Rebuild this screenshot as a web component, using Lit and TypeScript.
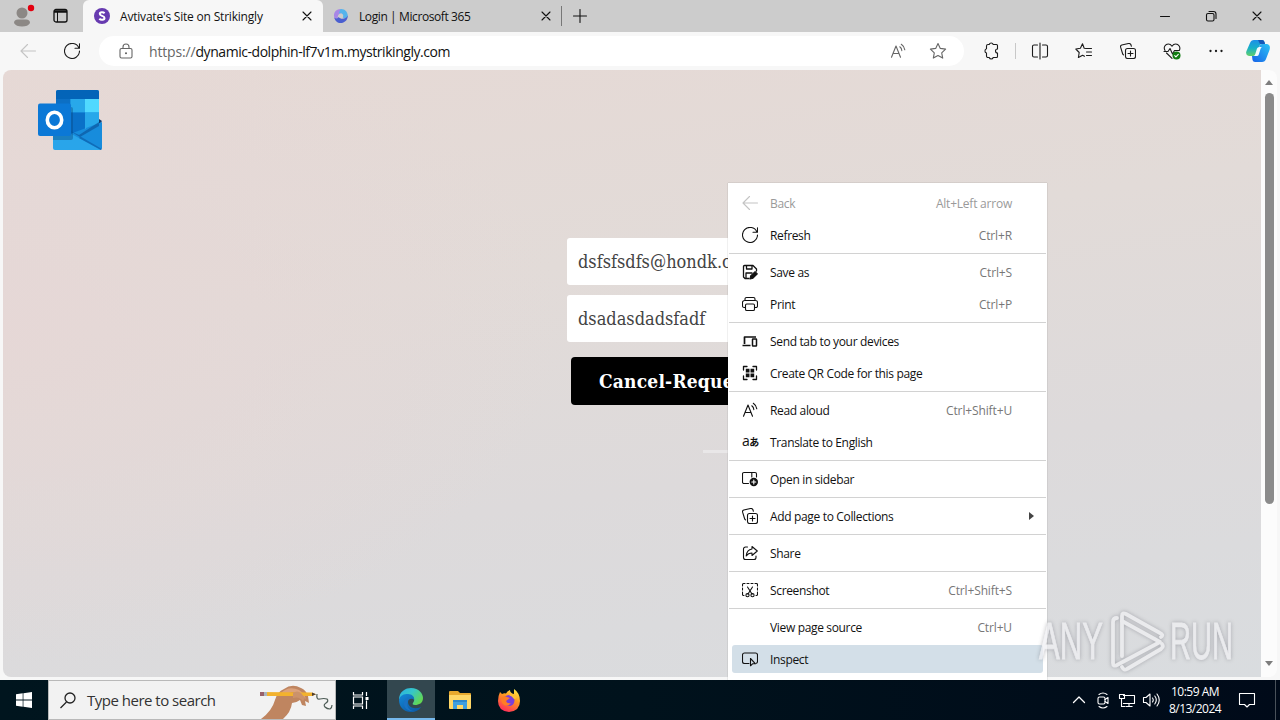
import { html, css, svg, nothing, LitElement } from 'lit';
import { customElement } from 'lit/decorators.js';
import { classMap } from 'lit/directives/class-map.js';

const line = (size: number, body: unknown) => html`
  <svg width=${size} height=${size} viewBox="0 0 ${size} ${size}" fill="none"
    stroke="currentColor" stroke-width="1.1" stroke-linecap="round" stroke-linejoin="round">${body}</svg>`;

const icons: Record<string, unknown> = {
  back: line(16, svg`<path d="M15.500 8H1M7.500 1.500 1 8l6.500 6.500" />`),
  refresh: line(16, svg`<path d="M14.900 5A7.500 7.500 0 1 0 15.500 8M15.500 .8V5.200H11" />`),
  save: line(16, svg`<path d="M7 14.500H3L1.500 13V2.500a1 1 0 0 1 1-1H11L14.500 5v2M4.500 1.800V5H10V1.800M4 14.300V9H10" stroke-width="1.300" />
    <path d="M8 15l.6-3 4.500-4.300 2.200 2.200L11 14.200Z" fill="currentColor" />`),
  print: line(16, svg`<path d="M3.500 11.500H2A1.500 1.500 0 0 1 .5 10V6.500a2 2 0 0 1 2-2h11a2 2 0 0 1 2 2V10a1.500 1.500 0 0 1-1.500 1.500h-1.500M3 4.300V3a1.500 1.500 0 0 1 1.500-1.500h7A1.500 1.500 0 0 1 13 3v1.300" />
    <rect x="3.500" y="8" width="9" height="6.500" rx="1.300" />`),
  devices: line(16, svg`<path d="M2.500 11V4H14M.5 12.500H8.500" stroke-width="1.700" stroke-linecap="butt" /><rect x="10.500" y="6" width="4" height="7" rx=".5" stroke-width="1.500" />`),
  qr: line(16, svg`<path d="M1.500 5V1.500H5M11 1.500h3.500V5M14.500 11v3.500H11M5 14.500H1.500V11" stroke-width="1.300" />
    <path d="M3.800 3.800h3.700v3.700H3.800zM8.500 3.800h3.700v3.700H8.500zM3.800 8.500h3.700v3.700H3.800zM8.500 8.500h3.700v3.700H8.500z" fill="currentColor" stroke="none" />`),
  read: line(16, svg`<path d="M1.500 14.300 6 3l4.500 11.300M3 10.500h6M9.800 3.800a5 5 0 0 1 2 3.800M11.300 1.300a8 8 0 0 1 3.500 5.500" />`),
  sidebar: line(16, svg`<path d="M6.500 12.500H2A1.500 1.500 0 0 1 .5 11V3A1.500 1.500 0 0 1 2 1.500h11A1.500 1.500 0 0 1 14.500 3V6M9.800 1.500V6" />
    <circle cx="11.800" cy="11" r="4.200" fill="currentColor" stroke="none" /><path d="M11.800 9v4M9.800 11h4" stroke="#fff" />`),
  collections: line(16, svg`<rect x="5.500" y="5.500" width="10" height="10" rx="2" /><path d="M10.500 8v5M8 10.500h5M3.500 11.800 2.700 11 .6 4.200A1.800 1.800 0 0 1 1.800 2L8.500 .5A2 2 0 0 1 11 2l.4 1.300" />`),
  share: line(16, svg`<path d="M5.500 2H3.500A2 2 0 0 0 1.500 4v8.500a2 2 0 0 0 2 2H12a2 2 0 0 0 2-2V11" /><path d="M10 1.500 15.300 6 10 10.500V8C7 8 5.500 9 4.200 11 4.500 7 6.500 4.500 10 4Z" />`),
  screenshot: line(16, svg`<path d="M.5 4V2.500a1 1 0 0 1 1-1H3M5 1.500h2M9 1.500h2M13 1.500h1.500a1 1 0 0 1 1 1V4M15.500 6v2M15.500 10v2.500a1 1 0 0 1-1 1H14M.5 6v2M.5 10v2.500a1 1 0 0 0 1 1H2" />
    <path d="M5.500 5 10 12M10.500 5 6 12" /><circle cx="5.500" cy="13.200" r="1.600" /><circle cx="10.500" cy="13.200" r="1.600" />`),
  inspect: line(16, svg`<path d="M7 12.500H2.500a2 2 0 0 1-2-2V4a2 2 0 0 1 2-2h11a2 2 0 0 1 2 2v6.500a2 2 0 0 1-1 1.700" /><path d="M8.500 7.500v7.300l2-2h3Z" />`),
  lock: line(16, svg`<rect x="2" y="5.500" width="12" height="9.500" rx="1.500" /><path d="M5 5.500V4a3 3 0 0 1 6 0v1.500" /><circle cx="8" cy="10.300" r=".5" fill="currentColor" />`),
  star: line(18, svg`<path d="m9 1.500 2.300 4.900 5.300 .7-3.900 3.700 1 5.300L9 13.500l-4.700 2.600 1-5.300-3.900-3.700 5.300-.7Z" />`),
  puzzle: line(18, svg`<path d="M6 2.500h1.200a2.100 2.100 0 0 1 4 0H14.500a1 1 0 0 1 1 1V7a2 2 0 0 0 0 4v3.500a1 1 0 0 1-1 1h-3.300a2.100 2.100 0 0 1-4 0H6a1.500 1.500 0 0 1-1.500-1.500v-3a2.200 2.200 0 0 1 0-4.200V4A1.500 1.500 0 0 1 6 2.500Z" />`),
  split: line(18, svg`<path d="M9 1v16M6.500 3H3a1.500 1.500 0 0 0-1.500 1.500v9A1.500 1.500 0 0 0 3 15h3.500M11.500 3H15a1.500 1.500 0 0 1 1.500 1.500v9A1.500 1.500 0 0 1 15 15h-3.500" />`),
  favorites: line(18, svg`<path d="M11 6.500 9.200 6.200 7.500 1.800 5.400 6.300 .8 7l3.400 3.500-.8 5 4.200-2.300 1.900 1M11.500 6.500h5M11.500 10h5M11.500 13.500h5" />`),
  heart: line(18, svg`<path d="M2 8.500C0 5 2.500 2 5.300 2 7.200 2 8.200 3 9 4.200 9.800 3 10.800 2 12.700 2 15.500 2 18 5 16.300 8.500M3.500 11 9 16.300M1 9.500H5L7 6.500 9.500 12l2-3.500H16" />
    <circle cx="13.500" cy="13.500" r="4" fill="#107c10" stroke="none" /><path d="m11.700 13.600 1.200 1.200 2.400-2.500" stroke="#fff" />`),
  more: line(18, svg`<path d="M3.500 9h.01M9 9h.01M14.500 9h.01" stroke-width="2.300" />`),
  close: line(10, svg`<path d="m1 1 8 8M9 1 1 9" />`),
  plus: line(14, svg`<path d="M7 .5v13M.5 7h13" />`),
};

interface Item {
  icon?: string;
  label: string;
  keys?: string;
  disabled?: boolean;
  submenu?: boolean;
  active?: boolean;
}

const menuGroups: Item[][] = [
  [
    { icon: 'back', label: 'Back', keys: 'Alt+Left arrow', disabled: true },
    { icon: 'refresh', label: 'Refresh', keys: 'Ctrl+R' },
  ],
  [
    { icon: 'save', label: 'Save as', keys: 'Ctrl+S' },
    { icon: 'print', label: 'Print', keys: 'Ctrl+P' },
  ],
  [
    { icon: 'devices', label: 'Send tab to your devices' },
    { icon: 'qr', label: 'Create QR Code for this page' },
  ],
  [
    { icon: 'read', label: 'Read aloud', keys: 'Ctrl+Shift+U' },
    { icon: 'translate', label: 'Translate to English' },
  ],
  [{ icon: 'sidebar', label: 'Open in sidebar' }],
  [{ icon: 'collections', label: 'Add page to Collections', submenu: true }],
  [{ icon: 'share', label: 'Share' }],
  [{ icon: 'screenshot', label: 'Screenshot', keys: 'Ctrl+Shift+S' }],
  [
    { label: 'View page source', keys: 'Ctrl+U' },
    { icon: 'inspect', label: 'Inspect', active: true },
  ],
];

@customElement('browser-tabs')
export class BrowserTabs extends LitElement {
  static styles = css`
    :host {
      display: flex;
      height: 32px;
      background: #ccc;
      color: #111;
      font-size: 12px;
    }
    svg {
      display: block;
    }
    .corner {
      display: flex;
      align-items: center;
      width: 83px;
      box-sizing: border-box;
      padding-left: 12px;
      gap: 17px;
    }
    .tab {
      display: flex;
      align-items: center;
      width: 240px;
      box-sizing: border-box;
      padding: 0 11px 0 11px;
      gap: 10px;
    }
    .tab.current {
      background: #f7f7f7;
      border-radius: 6px 6px 0 0;
    }
    .tab.other {
      width: 239px;
      height: 20px;
      margin-top: 6px;
      padding: 0 10px;
      border-right: 1px solid #777;
    }
    .title {
      flex: 1;
      white-space: nowrap;
      letter-spacing: -0.2px;
    }
    .other .title {
      letter-spacing: -0.4px;
    }
    .add {
      align-self: center;
      padding-left: 11px;
      flex: 1;
    }
    .control {
      display: grid;
      place-items: center;
      width: 46px;
    }
  `;

  render() {
    return html`
      <div class="corner">
        <svg width="24" height="24" viewBox="0 0 24 24">
          <circle cx="10" cy="9" r="5.500" fill="#8c8885" />
          <path d="M2 19q0-3.500 4-3.500h8q4 0 4 3.500-2 3.500-8 3.500T2 19Z" fill="#8c8885" />
          <circle cx="19" cy="4" r="3.200" fill="#e3000f" />
        </svg>
        <svg width="16" height="16" viewBox="0 0 16 16" fill="none" stroke="#111">
          <rect x="1" y="1.500" width="13" height="12.500" rx="2" stroke-width="1.300" />
          <path d="M1 3.500h13" stroke-width="2.500" />
          <path d="M4.500 4v10" />
        </svg>
      </div>
      <div class="tab current">
        <svg width="16" height="16" viewBox="0 0 16 16">
          <circle cx="8" cy="8" r="8" fill="#673ab0" />
          <path d="M10.600 5.200C9.500 4 5.800 3.700 5.800 6c0 2.200 4.700 1.500 4.700 3.900 0 2.300-3.900 2.200-5.200 .8" fill="none" stroke="#fff" stroke-width="2" />
        </svg>
        <span class="title">Avtivate's Site on Strikingly</span>
        ${icons.close}
      </div>
      <div class="tab other">
        <svg width="16" height="16" viewBox="0 0 16 16">
          <path d="M7.500 1C3 1 0 5 1.300 9.500 2 12 4 12.500 5.500 11.500 3.500 8 6 4.500 10 5Z" fill="#a887e6" />
          <path d="M7.500 1c4-.5 7 2.500 7.300 6.500-.3 2.500-3 3.500-5 2 1.500-3-1-5-4-4Z" fill="#55b4ec" />
          <path d="M1.300 9.500C2 13 5 15.500 8.500 15c4-.5 6.500-4 6.300-7.500C13 11 8 12 5.500 9 4.500 11 2.500 11 1.300 9.500Z" fill="#4a5fd0" />
        </svg>
        <span class="title">Login | Microsoft 365</span>
        ${icons.close}
      </div>
      <div class="add">${icons.plus}</div>
      <div class="control">${line(10, svg`<path d="M.5 5.500h9" />`)}</div>
      <div class="control">
        ${line(12, svg`<rect x="1.500" y="3.500" width="7.500" height="7.500" rx="1.500" /><path d="M4 1.500h4.500a2.500 2.500 0 0 1 2.500 2.500V8.500" />`)}
      </div>
      <div class="control">${icons.close}</div>
    `;
  }
}

@customElement('browser-toolbar')
export class BrowserToolbar extends LitElement {
  static styles = css`
    :host {
      display: flex;
      align-items: center;
      height: 38px;
      background: #f7f7f7;
      color: #1b1b1b;
    }
    svg {
      display: block;
    }
    .slot {
      display: grid;
      place-items: center;
      width: 44px;
    }
    .nav {
      display: flex;
      width: 99px;
      box-sizing: border-box;
      padding-left: 6px;
    }
    .dim {
      color: #c4c4c4;
    }
    .address {
      display: flex;
      align-items: center;
      width: 865px;
      height: 30px;
      box-sizing: border-box;
      padding: 0 6px 0 19px;
      border-radius: 15px;
      background: #fff;
      color: #666;
    }
    .url {
      flex: 1;
      padding-left: 15px;
      font-size: 14px;
      letter-spacing: -0.16px;
      white-space: nowrap;
    }
    .host {
      color: #111;
      letter-spacing: -0.45px;
    }
    .small {
      width: 40px;
    }
    .tools {
      display: flex;
      align-items: center;
      padding-left: 5px;
    }
    .divider {
      width: 1px;
      height: 16px;
      margin: 0 2px;
      background: #c8c8c8;
    }
  `;

  render() {
    return html`
      <div class="nav">
        <div class="slot dim">${icons.back}</div>
        <div class="slot">${icons.refresh}</div>
      </div>
      <div class="address">
        ${icons.lock}
        <div class="url">https://<span class="host">dynamic-dolphin-lf7v1m.mystrikingly.com</span></div>
        <div class="slot small">${icons.read}</div>
        <div class="slot small">${icons.star}</div>
      </div>
      <div class="tools">
        <div class="slot">${icons.puzzle}</div>
        <div class="divider"></div>
        ${['split', 'favorites', 'collections', 'heart', 'more'].map(
          (name) => html`<div class="slot">${icons[name]}</div>`
        )}
        <div class="slot small">
          <svg width="24" height="24" viewBox="0 0 24 24">
            <defs>
              <linearGradient id="a" x1="0" y1="0" x2="0" y2="1">
                <stop stop-color="#1d8fe8" /><stop offset=".5" stop-color="#17b0c8" /><stop offset="1" stop-color="#62d06a" />
              </linearGradient>
              <linearGradient id="b" x1="1" y1="0" x2="0" y2="1">
                <stop stop-color="#2cc3f5" /><stop offset="1" stop-color="#1762e8" />
              </linearGradient>
            </defs>
            <path d="M8 1h8q2 0 2.500 2l.5 2h-3q-2 0-2.600 2l-2.600 8q-.8 2-3 2H3Q-1 16 .5 12L4 4q1-3 4-3Z" fill="url(#a)" />
            <path d="M16 23H9q-2 0-2.500-2L6 17h2q2 0 3-3l2.500-7q.6-2 2.500-2h5q4 1 2.500 6L20 20q-1 3-4 3Z" fill="url(#b)" />
            <path d="M8 1h8q2 0 2.500 2l.5 2h-5L12 1Z" fill="#1557b8" />
            <path d="M11 9.500 9.300 15q-.6 2-2 2h3.500q1.500 0 2-1.500L14.500 10q.6-2 1.800-2h-3q-1.700 0-2.300 1.500Z" fill="#f2fbff" />
          </svg>
        </div>
      </div>
    `;
  }
}

@customElement('context-menu')
export class ContextMenu extends LitElement {
  static styles = css`
    :host {
      display: block;
      box-sizing: border-box;
      width: 319px;
      height: 497px;
      padding: 4px 1px;
      background: #fff;
      box-shadow: 0 0 1px rgba(0, 0, 0, 0.35);
      color: #111;
      font-size: 12px;
    }
    svg {
      display: block;
    }
    .group {
      display: flex;
      flex-direction: column;
      gap: 4px;
      padding: 2px 3px;
    }
    .group + .group {
      border-top: 1px solid #d2d2d2;
      margin-top: 2px;
      padding-top: 4px;
    }
    .item {
      display: flex;
      align-items: center;
      height: 28px;
      padding: 0 31px 0 10px;
      border-radius: 3px;
    }
    .item.active {
      background: #d3dfe8;
    }
    .item.disabled {
      color: #9a9a9a;
    }
    .icon {
      width: 16px;
      margin-right: 12px;
      white-space: nowrap;
    }
    .disabled .icon {
      color: #c4c4c4;
    }
    .glyphs {
      display: block;
      font: 14px/16px 'Open Sans', sans-serif;
      letter-spacing: -0.5px;
      margin-top: -2px;
    }
    .kana {
      font-family: 'Noto Sans CJK JP', sans-serif;
      font-size: 10px;
      font-weight: 700;
    }
    .label {
      flex: 1;
      letter-spacing: -0.34px;
    }
    .keys {
      color: #777;
      letter-spacing: -0.13px;
    }
    .disabled .keys {
      color: #9a9a9a;
      letter-spacing: -0.22px;
    }
    .arrow {
      width: 0;
      margin-right: -22px;
      border: solid transparent;
      border-width: 4px 0 4px 5px;
      border-left-color: #444;
    }
  `;

  renderIcon(name?: string) {
    if (name === 'translate') {
      return html`<span class="glyphs">a<span class="kana">あ</span></span>`;
    }
    return name ? icons[name] : nothing;
  }

  renderItem(item: Item) {
    return html`
      <div class=${classMap({ item: true, disabled: !!item.disabled, active: !!item.active })}>
        <div class="icon">${this.renderIcon(item.icon)}</div>
        <div class="label">${item.label}</div>
        ${item.keys ? html`<div class="keys">${item.keys}</div>` : nothing}
        ${item.submenu ? html`<div class="arrow"></div>` : nothing}
      </div>
    `;
  }

  render() {
    return menuGroups.map((group) => html`<div class="group">${group.map((item) => this.renderItem(item))}</div>`);
  }
}

@customElement('site-page')
export class SitePage extends LitElement {
  static styles = css`
    :host {
      display: flex;
      flex: 1;
      padding: 0 3px 3px 3px;
      background: #f7f7f7;
    }
    .page {
      flex: 1;
      border-radius: 8px 0 0 8px;
      background: radial-gradient(ellipse 560px 340px at 0% 42%, rgba(230, 215, 214, 0.9), transparent),
        linear-gradient(172deg, #e6d9d5 0%, #e2dbd8 35%, #dddadb 65%, #d9dcdf 100%);
    }
    .logo {
      display: block;
      margin: 20px 0 0 35px;
    }
    .form {
      width: 320px;
      padding: 88px 0 0 564px;
      font-family: 'DejaVu Serif Condensed', 'DejaVu Serif', serif;
      font-stretch: condensed;
      font-size: 18px;
      color: #444;
    }
    .field {
      display: flex;
      align-items: center;
      height: 47px;
      margin-bottom: 10px;
      padding-left: 11px;
      border-radius: 3px;
      background: #fff;
    }
    .submit {
      display: flex;
      align-items: center;
      height: 48px;
      margin: 15px 0 0 4px;
      padding-left: 28px;
      border-radius: 4px;
      background: #000;
      color: #fff;
      font-size: 19px;
      font-weight: bold;
      letter-spacing: 0.2px;
    }
    .rule {
      width: 120px;
      height: 3px;
      margin: 45px 0 0 136px;
      background: #e9e7e8;
    }
    .scrollbar {
      display: flex;
      flex-direction: column;
      align-items: center;
      justify-content: space-between;
      width: 16px;
      box-sizing: border-box;
      padding: 10px 0 11px;
      border-radius: 0 8px 8px 0;
      background: #fcfcfc;
    }
    .thumb {
      width: 9px;
      height: 411px;
      margin: 8px 0 auto;
      border-radius: 5px;
      background: #8b8b8b;
    }
    .up,
    .down {
      border: solid transparent;
      border-width: 0 4.5px 5px;
      border-bottom-color: #7d7d7d;
    }
    .down {
      border-width: 5px 4.5px 0;
      border-top-color: #7d7d7d;
    }
  `;

  render() {
    return html`
      <div class="page">
        <svg class="logo" width="64" height="60" viewBox="0 0 64 60">
          <path d="M18 2q0-2 2-2h39q2 0 2 2v28H18Z" fill="#1490df" />
          <path d="M18 2q0-2 2-2h39q2 0 2 2v7H18Z" fill="#0364b8" />
          <path d="M18 9h14.500v13.500H18Z" fill="#0c6fc4" />
          <path d="M32.500 9H47v13.500H32.500Z" fill="#28a8ea" />
          <path d="M47 9h14v13.500H47Z" fill="#50d9ff" />
          <path d="M18 22.500h14.500V46H18Z" fill="#0a5cab" />
          <path d="M32.500 22.500H47V46H32.500Z" fill="#0a70c8" />
          <path d="M47 22.500h14V38H47Z" fill="#28a8ea" />
          <path d="m61 29 3 2-3 4Z" fill="#123b6d" />
          <path d="M32 44 64 32V58q0 2-2 2H32Z" fill="#178cdc" />
          <path d="M32 41 41 45 61 32V36L42 47Z" fill="#0a4f94" opacity=".6" />
          <path d="M15 34 63 60H17q-2 0-2-2Z" fill="#29a5ea" />
          <path d="M41 48 63 60l.5-1.200L42.500 46.500Z" fill="#0f6cb8" />
          <path d="M15 17h18q2 0 2 2v29q0 2-2 2H15Z" fill="#084780" opacity=".4" />
          <rect y="13.500" width="33" height="32.500" rx="2" fill="#0b78d6" />
          <ellipse cx="16.500" cy="30" rx="7.200" ry="7.800" fill="none" stroke="#fff" stroke-width="3.600" />
        </svg>
        <div class="form">
          <div class="field">dsfsfsdfs@hondk.com</div>
          <div class="field">dsadasdadsfadf</div>
          <div class="submit">Cancel-Request</div>
          <div class="rule"></div>
        </div>
      </div>
      <div class="scrollbar">
        <div class="up"></div>
        <div class="thumb"></div>
        <div class="down"></div>
      </div>
    `;
  }
}

@customElement('task-bar')
export class TaskBar extends LitElement {
  static styles = css`
    :host {
      display: flex;
      height: 40px;
      background: linear-gradient(90deg, #00151e, #00121c 50%, #000a19);
      color: #fff;
    }
    svg {
      display: block;
    }
    .cell {
      display: grid;
      place-items: center;
      width: 48px;
    }
    .gap {
      margin: 0 1px 0 0;
    }
    .current {
      background: #33474f;
      box-shadow: inset 0 -2px #76b9ed;
    }
    .search {
      display: flex;
      align-items: center;
      width: 288px;
      box-sizing: border-box;
      padding-left: 11px;
      border: 1px solid #b9b9b9;
      background: #f2f2f2;
      color: #333;
      font-size: 15px;
    }
    .prompt {
      flex: 1;
      padding-left: 11px;
      letter-spacing: -0.5px;
      white-space: nowrap;
    }
    .task-view {
      width: 48px;
      margin-right: 3px;
    }
    .tray {
      display: flex;
      align-items: center;
      gap: 6px;
      margin-left: auto;
      margin-right: 4px;
      border-right: 1px solid #49515a;
    }
    .clock {
      width: 64px;
      margin-left: -3px;
      font-size: 12px;
      line-height: 17px;
      letter-spacing: -0.52px;
      text-align: center;
      white-space: nowrap;
    }
    .note {
      padding: 0 19px 0 5px;
    }
  `;

  render() {
    return html`
      <div class="cell">
        <svg width="16" height="16" viewBox="0 0 16 16" fill="#fff">
          <path d="M0 2.300 6.700 1.300V7.600H0ZM7.400 1.200 16 0v7.600H7.400ZM0 8.400h6.700v6.300L0 13.700ZM7.400 8.400H16V16l-8.600-1.200Z" />
        </svg>
      </div>
      <div class="search">
        <svg width="16" height="17" viewBox="0 0 16 17" fill="none" stroke="#222" stroke-width="1.300">
          <circle cx="10" cy="6" r="5" /><path d="M6.500 10 .5 16" />
        </svg>
        <div class="prompt">Type here to search</div>
        <svg width="75" height="38" viewBox="0 0 75 38">
          <path d="M1 38q11-8 14-19 2-8 9-11 8-6 17-1 5 2 7 8l1 7-4-2 1 5-4-1-2-5q-4 3-8 3-1 9-9 16Z" fill="#bf8560" />
          <path d="M20 13q8-9 19-4 5 3 7 9l-7-6q-9-3-13 3Z" fill="#dca27c" />
          <path d="M0 11 52 11.500l4 1.700-4 1.800L0 15Z" fill="#f2b22e" />
          <path d="M0 11h4v4H0Z" fill="#99606a" /><path d="M4 11h3v4H4Z" fill="#aab4bd" />
          <path d="m52 11.500 4 1.700-4 1.800Z" fill="#4b3c33" />
          <path d="M33 12q4-3 8 0l4 5-2 3q-4-5-10-3Z" fill="#cb926b" />
          <path d="M57 13q-1 6 3 5t7 0q2 2-1 4t-1 4 5 2q2-1 2-4" fill="none" stroke="#4c5b55" stroke-width="1.200" />
        </svg>
      </div>
      <div class="cell task-view">
        <svg width="17" height="17" viewBox="0 0 17 17" fill="none" stroke="#fff" stroke-width="1.200">
          <path d="M1.500 0v3h9V0M1.500 17v-3h9v3M1.500 5h9v7h-9ZM14.500 0v4M14.500 8.500V17" />
          <path d="M13.500 5h3v3h-3z" fill="#fff" stroke="none" />
        </svg>
      </div>
      <div class="cell current gap">
        <svg width="24" height="24" viewBox="0 0 24 24">
          <defs>
            <linearGradient id="e" x2="1" y2=".6">
              <stop stop-color="#28afe6" /><stop offset=".5" stop-color="#36c6c9" /><stop offset="1" stop-color="#62d753" />
            </linearGradient>
            <linearGradient id="f" x2=".8" y2="1">
              <stop stop-color="#1488d8" /><stop offset="1" stop-color="#0c59a4" />
            </linearGradient>
          </defs>
          <path d="M0 12C0 3 7 0 12 0c8 0 12 6 12 10 0 5-4 7-8 7-2 0-3-1-2-2 3-4 0-7-4-7-5 0-9 2-10 4Z" fill="url(#e)" />
          <path d="M0 12C1 7 5 6 9 6c4 0 7 3 6 6-1-2-6-2-6 2 0 5 6 8 13 5-2 4-7 5-10 5C4 24 0 18 0 12Z" fill="url(#f)" />
          <path d="M9 12c-3 5 1 12 7 11-5 1-11-2-11-7 0-4 3-7 6-6-1 .5-1.500 1-2 2Z" fill="#1a72c4" />
        </svg>
      </div>
      <div class="cell gap">
        <svg width="22" height="20" viewBox="0 0 22 20">
          <path d="M0 2q0-1 1-1h8l2 2h10q1 0 1 1v14H0Z" fill="#e8a92e" />
          <path d="M0 5h22v13q0 1-1 1H1q-1 0-1-1Z" fill="#ffd767" />
          <path d="M4 10h14v9h-4v-4H8v4H4Z" fill="#3f9fe0" /><path d="M4 10h14v2H4Z" fill="#2c87cc" />
        </svg>
      </div>
      <div class="cell">
        <svg width="24" height="24" viewBox="0 0 24 24">
          <defs>
            <linearGradient id="g" x1=".8" y1="0" x2=".3" y2="1">
              <stop stop-color="#fff04d" /><stop offset=".4" stop-color="#ff9a1f" /><stop offset="1" stop-color="#ff2a5c" />
            </linearGradient>
          </defs>
          <path d="M3 4l2 2q2-1 4-.5Q10 3 13 2q0 3 4 4V1q6 4 6 12 0 10-11 11Q1 23 1 13q0-5 2-9Z" fill="url(#g)" />
          <circle cx="12" cy="12.500" r="5.500" fill="#7a3fdb" />
          <path d="M4 10q3-3 6-1l3 1-4 3q1 3 5 2-3 4-7 2-3-2-3-7Z" fill="#ff7d25" />
          <path d="M12 7q5-2 8 2-1 2-3 2-2-3-5-4Z" fill="#ffc233" />
        </svg>
      </div>
      <div class="tray">
        ${line(18, svg`<path d="m3.500 11.500 5.500-5.500 5.500 5.500" stroke-width="1.300" />`)}
        ${line(18, svg`<rect x="4" y="6" width="7" height="7" rx="1.500" /><path d="m11 8.500 3-2v6l-3-2M5 3.500q4-3 8 0M5 15.500q4 3 8 0" />`)}
        ${line(18, svg`<path d="M5.500 4.500h11v8h-11M8 15.500h6M11 12.500v3M1.500 3.500h5v4h-5zM3.500 7.500v8h3" stroke-linecap="square" />`)}
        ${line(18, svg`<path d="M1.500 6.500h2.500L8 3v12l-4-3.500H1.500ZM10.500 7q1.500 2 0 4M12.800 5q3 4 0 8M15 3q4.500 6 0 12" />`)}
        <div class="clock">10:59 AM<br />8/13/2024</div>
        <div class="note">${line(18, svg`<path d="M1.500 2.500h15v11h-5L9 16l-2.500-2.500h-5Z" stroke-linecap="square" />`)}</div>
      </div>
    `;
  }
}

@customElement('app-root')
export class AppRoot extends LitElement {
  static styles = css`
    :host {
      display: flex;
      flex-direction: column;
      position: relative;
      width: 1280px;
      height: 720px;
      overflow: hidden;
      font-family: 'Open Sans', 'Noto Sans', sans-serif;
    }
    .menu {
      position: absolute;
      left: 728px;
      top: 183px;
    }
    .watermark {
      position: absolute;
      left: 1034px;
      top: 604px;
      overflow: visible;
      filter: drop-shadow(0 0 2px rgba(90, 90, 100, 0.55));
      opacity: 0.75;
    }
    .brand {
      font-family: 'Liberation Sans', sans-serif;
      font-size: 51px;
      fill: #f0f0f3;
      stroke: #f0f0f3;
      stroke-width: 0.8px;
    }
  `;

  render() {
    return html`
      <browser-tabs></browser-tabs>
      <browser-toolbar></browser-toolbar>
      <site-page></site-page>
      <task-bar></task-bar>
      <context-menu class="menu"></context-menu>
      <svg class="watermark" width="220" height="74" viewBox="0 0 220 74">
        <text class="brand" x="5" y="55" textLength="64" lengthAdjust="spacingAndGlyphs">ANY</text>
        <text class="brand" x="136" y="55" textLength="63" lengthAdjust="spacingAndGlyphs">RUN</text>
        <g fill="none" stroke="#f0f0f2" stroke-width="3.800" stroke-linejoin="round" stroke-linecap="round">
          <path d="M83 14q-4 0-4 4v41q0 4 4 2L126 38 88 17" />
          <path d="M88 52V12q0-4 4-2l34 19q4 2 1 4" />
          <path d="M88 63q2 4 5 2l34-20q3-2 1-5" />
        </g>
      </svg>
    `;
  }
}
